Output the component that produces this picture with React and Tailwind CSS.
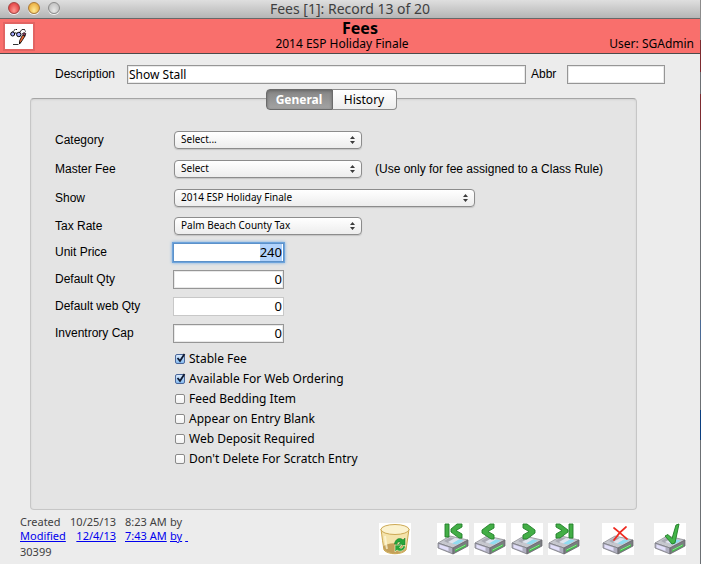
import { useEffect, useRef } from "react";

const tf = "font-['Noto_Sans','Open_Sans',sans-serif]";
const lf = "w-[119px] shrink-0 font-['Liberation_Sans',Arial,sans-serif] text-[12px] leading-4";

function TrafficLight({ tone, label }) {
  return <button aria-label={label} className={`size-3 rounded-full border shadow-[0_1px_0_#f4f4f4] ${tone}`} />;
}

function ToolGlasses() {
  return (
    <svg width="18" height="18" viewBox="0 0 18 18" fill="none" stroke="#000">
      <path d="M1.500 5 5 1.500h2M9 5l3-3.500h2.500l1 2" strokeWidth="1" strokeDasharray="2.500 .4" />
      <circle cx="2.700" cy="6" r="2" fill="#a4abff" />
      <circle cx="8.800" cy="6.500" r="2.200" fill="#a4abff" />
      <path d="M4.600 5.500c1-.8 1.500-.8 2.200 0" />
      <path d="m15 8-3.800 6-1.700 2 .2-3.500 2.700-5.200Z" fill="#ef6b35" strokeWidth=".8" />
      <path d="m12.300 6 1.500-1.500 2 1-.7 2.500Z" fill="#8d3a5a" strokeWidth=".7" />
      <path d="m9.500 13.500 1.300 1-1.600 2Z" fill="#000" stroke="none" />
      <path d="M3 16.500h5.500" strokeWidth=".8" />
    </svg>
  );
}

function Popup({ id, label, value, width, note }) {
  return (
    <div className="flex items-center">
      <label htmlFor={id} className={lf}>{label}</label>
      <div className={`relative h-[18px] ${width}`}>
        <select
          id={id}
          className={`block h-full w-full appearance-none rounded-[4px] border border-[#8c8c8c] bg-linear-to-b from-white to-[#ededed] pb-[2px] pl-[6px] text-[10px] leading-[14px] text-black shadow-[0_1px_1px_#c4c4c4] ${tf}`}
        >
          <option>{value}</option>
        </select>
        <svg className="pointer-events-none absolute top-[5px] right-[7px]" width="5" height="8" viewBox="0 0 5 8" fill="#3c3c3c">
          <path d="M0 3h5L2.500 0ZM0 5h5L2.500 8Z" />
        </svg>
      </div>
      {note && <span className="ml-[13px] font-['Liberation_Sans',Arial,sans-serif] text-[12px] leading-4">{note}</span>}
    </div>
  );
}

function NumberField({ id, label, value, tone, inputRef }) {
  return (
    <div className="flex items-center">
      <label htmlFor={id} className={`${lf} pb-[2px]`}>{label}</label>
      <input
        id={id}
        ref={inputRef}
        defaultValue={value}
        className={`-ml-px h-[19px] w-[111px] border bg-white pr-px text-right text-[13px] outline-none selection:bg-[#b2d3fb] selection:text-black ${tf} ${tone}`}
      />
    </div>
  );
}

function Check({ label, checked }) {
  return (
    <label className="flex h-5 items-center gap-1">
      <span className="relative size-[10px]">
        <input
          type="checkbox"
          defaultChecked={checked}
          className="peer block size-[10px] appearance-none rounded-[2px] border border-[#8a8a8a] bg-linear-to-b from-white to-[#f1f1f1] checked:border-[#4b6699] checked:from-[#d8e9fb] checked:to-[#86bdf2]"
        />
        <svg className="pointer-events-none absolute -top-px left-px hidden peer-checked:block" width="10" height="10" viewBox="0 0 10 10" fill="none" stroke="#111b33" strokeWidth="1.800">
          <path d="m1.500 5 2.500 3L8.500 1" />
        </svg>
      </span>
      {label}
    </label>
  );
}

const marks = {
  first: "M8 1h4v13H8ZM20 1h5v3l-6 3.500 6 3.500v4h-3l-8-6V6Z",
  previous: "M16 1h4v4l-6 3.500 6 3.500v4h-3L8 10V7Z",
  next: "M12 1h4l8 6v3l-8 6h-4v-4l6-3.500L12 5Z",
  last: "M8 1h4l8 6v2l-8 6H8v-4l6-3.500L8 4ZM21 1h4v14h-4Z",
};

function Drive({ kind }) {
  return (
    <svg width="32" height="32" viewBox="0 0 32 32" fill="none" strokeLinejoin="round">
      <path fill="#fff" d="M0 0h32v32H0z" />
      <path d="m1 20 12-7 18 4-15 8Z" fill="#c6c7ce" stroke="#8f8f96" strokeWidth=".8" />
      <path d="m7 18 6-3.500 5 1-7 4.500Z" fill="#a9aab4" />
      <path d="m11 19 7-4 5 1-7 4.500Z" fill="#dfe3ee" />
      <path d="m15 20.500 7-4 5 1-7 4Z" fill="#8fdcf0" />
      <path d="m1 20 15 5v6L1 25Z" fill="#b0afc0" stroke="#7a7a82" strokeWidth=".8" />
      <path d="m2.500 21.500 9 3v3.500l-9-3.200Z" fill="#e2dffa" />
      <path d="m16 25 15-8v6l-15 8Z" fill="#7b7d82" stroke="#66666b" strokeWidth=".8" />
      <path d="m18 26.500 11-5.500v2.500L18 29Z" fill="#46b84e" />
      <path d="m18.500 27 10-5" stroke="#9df0a0" strokeWidth=".7" />
      {marks[kind] && <path d={marks[kind]} fill="#43ae46" stroke="#23802a" strokeWidth=".9" />}
      {kind === "cancel" && <path d="M12 5c4 3 8 7 13 11M24 4c-4 3-8 7-12 13" stroke="#ee2a20" strokeWidth="1.700" strokeLinecap="round" />}
      {kind === "save" && <path d="m11 13 3-1.500 4 4L22 2l3-1-4 19-3 1Z" fill="#43b649" stroke="#1f7a25" strokeWidth=".9" />}
    </svg>
  );
}

function Trash() {
  return (
    <svg width="32" height="32" viewBox="0 0 32 32" fill="none">
      <path fill="#fff" d="M0 0h32v32H0z" />
      <path d="M2 6c1 8 2 15 3 21 4 5 18 5 22 0l3-21Z" fill="#f4e3ab" stroke="#cba64e" />
      <path d="M4 24c5-5 15-5 23 0l-.500 3c-4 4.500-17 4.500-21 0Z" fill="#c3a05a" />
      <ellipse cx="16" cy="6.500" rx="14" ry="5" fill="#fbf2cf" stroke="#cda955" />
      <path d="M6 13c.7 5 1 9 2 13" stroke="#fff9de" strokeWidth="2" opacity=".7" />
      <path d="M15.500 21c.5-5 5.500-7 8.500-4l2-2v7h-7l2.500-2.500c-2-1.500-3.500 0-3.500 2.500Z" fill="#27a53a" stroke="#14752b" strokeWidth=".5" />
      <path d="M26.500 23c-.500 5-5.500 6.500-8.500 4l-2 2v-7h7l-2.500 2.500c2 1.500 3.500.5 3.500-2Z" fill="#27a53a" stroke="#fbf2cf" strokeWidth=".6" />
    </svg>
  );
}

function Tool({ label, children }) {
  return <button aria-label={label} className="block size-8 shrink-0">{children}</button>;
}

export default function App() {
  const price = useRef(null);
  useEffect(() => {
    price.current.focus();
    price.current.select();
  }, []);
  const plain = "border-[#969696] shadow-[inset_0_0_0_1px_#e9e9e9]";
  const link = "text-[#0000ee] underline";
  return (
    <div className={`flex min-h-screen bg-[#ececec] text-black ${tf}`}>
      <div className="flex min-w-0 flex-1 flex-col">
        <header className="grid h-[19px] grid-cols-[1fr_auto_1fr] items-center border-b border-[#686868] bg-linear-to-b from-[#dfdfdf] to-[#b5b5b5]">
          <div className="flex gap-2 pb-[2px] pl-2">
            <TrafficLight label="Close" tone="border-[#a54543] bg-radial-[at_50%_75%] from-[#ff9a93] to-[#d9282b]" />
            <TrafficLight label="Minimize" tone="border-[#ab7a35] bg-radial-[at_50%_75%] from-[#ffeb96] to-[#e39a23]" />
            <TrafficLight label="Zoom" tone="border-[#8b8b8b] bg-radial-[at_50%_75%] from-[#e8e8e8] to-[#b5b5b5]" />
          </div>
          <h1 className="text-[14px] leading-4 text-[#3f3f3f]">Fees [1]: Record 13 of 20</h1>
        </header>
        <section className="grid h-[35px] grid-cols-[1fr_auto_1fr] border-b border-[#4b4b4b] bg-[#f96f6c]">
          <button aria-label="Edit" className="mt-[3px] ml-[3px] flex h-[29px] w-8 items-center justify-center border-2 border-[#e26462] bg-white">
            <ToolGlasses />
          </button>
          <div className="mr-4 text-center">
            <h2 className="pl-9 text-[16px] leading-[18px] font-bold">Fees</h2>
            <p className="text-[12px] leading-[14px]">2014 ESP Holiday Finale</p>
          </div>
          <p className="self-end pr-[6px] pb-[2px] text-right text-[12px] leading-[14px]">User: SGAdmin</p>
        </section>
        <main className="flex flex-col pr-[63px] pl-[30px]">
          <div className="-mr-7 flex items-center pt-[11px] pl-[25px]">
            <label htmlFor="description" className="w-[72px] pb-[2px] font-['Liberation_Sans',Arial,sans-serif] text-[12px] leading-4">Description</label>
            <input id="description" defaultValue="Show Stall" className={`h-[19px] min-w-0 flex-1 border bg-white pl-px text-[12px] ${plain}`} />
            <label htmlFor="abbr" className="w-[41px] pb-[2px] pl-[5px] font-['Liberation_Sans',Arial,sans-serif] text-[12px] leading-4">Abbr</label>
            <input id="abbr" className={`h-[19px] w-[98px] border bg-white ${plain}`} />
          </div>
          <section className="mt-[14px] rounded-[4px] border border-[#c6c6c6] border-t-[#a5a5a5] bg-[#e4e4e4] pb-10 shadow-[inset_0_1px_2px_#d2d2d2]">
            <div className="-mt-[10px] flex justify-center pr-[5px] text-[12px] leading-4">
              <button className="h-[21px] w-[67px] rounded-l-[4px] border border-[#6b6b6b] bg-linear-to-b from-[#858585] to-[#a4a4a4] font-bold text-white shadow-[inset_0_1px_3px_#666]">General</button>
              <button className="h-[21px] w-16 rounded-r-[4px] border border-l-0 border-[#8c8c8c] bg-linear-to-b from-white to-[#ededed]">History</button>
            </div>
            <div className="flex flex-col pt-[21px] pl-6">
              <div className="flex flex-col gap-[11px]">
                <Popup id="category" label="Category" value="Select..." width="w-[188px]" />
                <Popup id="master" label="Master Fee" value="Select" width="w-[188px]" note="(Use only for fee assigned to a Class Rule)" />
                <Popup id="show" label="Show" value="2014 ESP Holiday Finale" width="w-[301px]" />
              </div>
              <div className="mt-[10px] flex flex-col gap-2">
                <Popup id="tax" label="Tax Rate" value="Palm Beach County Tax" width="w-[188px]" />
                <NumberField id="price" label="Unit Price" value="240" inputRef={price} tone="border-[#5c91c9] shadow-[0_0_0_1px_#6ea4dc,0_0_3px_1px_#79ade2]" />
                <NumberField id="qty" label="Default Qty" value="0" tone={plain} />
                <NumberField id="webqty" label="Default web Qty" value="0" tone="border-[#c8c8c8]" />
                <NumberField id="cap" label="Inventrory Cap" value="0" tone={plain} />
              </div>
              <div className="mt-[6px] flex flex-col items-start pl-[120px] text-[12px]">
                <Check label="Stable Fee" checked />
                <Check label="Available For Web Ordering" checked />
                <Check label="Feed Bedding Item" />
                <Check label="Appear on Entry Blank" />
                <Check label="Web Deposit Required" />
                <Check label="Don't Delete For Scratch Entry" />
              </div>
            </div>
          </section>
        </main>
        <footer className="flex justify-between pt-[5px] pr-[14px] pl-5">
          <div className="text-[11px] leading-[14px] text-[#3f3f3f]">
            <div className="grid grid-cols-[48px_48px_54px_auto]">
              <span>Created</span>
              <span className="text-right">10/25/13</span>
              <span className="pl-[9px]">8:23 AM</span>
              <span>by</span>
              <a href="#modified" className={link}>Modified</a>
              <a href="#modified" className={`text-right ${link}`}>12/4/13</a>
              <a href="#modified" className={`pl-[9px] ${link}`}>7:43 AM</a>
              <span className="flex gap-[3px]">
                <a href="#modified" className={link}>by</a>
                <span className={link}>&nbsp;</span>
              </span>
            </div>
            <p className="pt-[2px]">30399</p>
          </div>
          <nav className="flex items-start pt-2">
            <Tool label="Delete"><Trash /></Tool>
            <div className="mr-[22px] ml-[26px] flex gap-[5px]">
              <Tool label="First record"><Drive kind="first" /></Tool>
              <Tool label="Previous record"><Drive kind="previous" /></Tool>
              <Tool label="Next record"><Drive kind="next" /></Tool>
              <Tool label="Last record"><Drive kind="last" /></Tool>
            </div>
            <div className="flex gap-5">
              <Tool label="Cancel"><Drive kind="cancel" /></Tool>
              <Tool label="Save"><Drive kind="save" /></Tool>
            </div>
          </nav>
        </footer>
      </div>
      <div className="flex w-px shrink-0 flex-col bg-[#6c7074]">
        <div className="h-10 bg-[#8c8c8c]" />
        <div className="h-8 bg-[#7d2b30]" />
        <div className="mt-[22px] h-9 bg-[#7d2b30]" />
        <div className="mt-[190px] h-5 bg-[#4a6a96]" />
        <div className="mt-[70px] h-[30px] bg-[#0b3f80]" />
      </div>
    </div>
  );
}
